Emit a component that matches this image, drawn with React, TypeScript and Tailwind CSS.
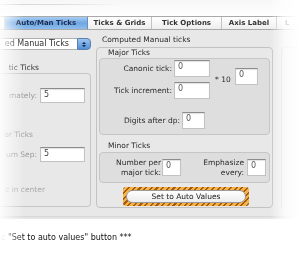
import React from 'react';

const Field = ({ className = '', value = '0' }: { className?: string; value?: string }) => (
    <div
        className={`h-[17px] bg-white border border-[#c2c2c2] border-t-[#8c8c8c] shadow-[inset_0_1px_1px_rgba(0,0,0,0.12)] pl-[3px] text-[8px] leading-[12px] text-[#555] ${className}`}
    >
        {value}
    </div>
);

// right-aligned text, only the part the picture shows
const EdgeLabel = ({ text, className = '' }: { text: string; className?: string }) => (
    <div className={`text-right whitespace-nowrap ${className}`}>{text}</div>
);

const App = () => {
    return (
        <div className="w-[300px] h-[253px] relative overflow-hidden bg-white font-['DejaVu_Sans',sans-serif] text-[#2a2a2a]">
            <div className="blur-[0.3px]">
                {/* top strip */}
                <div className="h-[16px] pt-[4px] bg-gradient-to-b from-[#f7f7f7] to-white">
                    <div className="h-px w-[120px] bg-gradient-to-r from-[#d4d4d4] via-[#dcdcdc] to-transparent" />
                </div>

                {/* Tabs */}
                <div className="h-[14px] flex bg-gradient-to-b from-white to-[#ededed] border-y border-[#a9a9a9] text-[7px] leading-[12px] font-bold text-[#333] whitespace-nowrap">
                    <div className="w-[5px] border-r border-[#b8b8b8]" />
                    <div className="w-[83px] text-center text-[#1c2c4c] bg-gradient-to-b from-[#a9cdf3] via-[#6fa7e3] to-[#8dbdee] border-r border-[#6a8fbc]">
                        Auto/Man Ticks
                    </div>
                    <div className="w-[64px] text-center border-r border-[#c2c2c2]">Ticks &amp; Grids</div>
                    <div className="w-[70px] text-center border-r border-[#c2c2c2]">Tick Options</div>
                    <div className="w-[55px] text-center border-r border-[#c2c2c2]">Axis Label</div>
                    <div className="pl-[8px]">L</div>
                </div>

                {/* Panel */}
                <div className="h-[186px] bg-[#e8e8e8] flex text-[7.5px] leading-[10px]">
                    {/* Left column */}
                    <div className="w-[92px] flex flex-col">
                        <div className="mt-[8px] h-[12px] flex">
                            <div className="flex-1 bg-white border-y border-[#b0b0b0] text-right whitespace-nowrap pr-[8px] leading-[10px] text-[8px]">
                                ed Manual Ticks
                            </div>
                            <div className="w-[14px] rounded-r-[4px] bg-gradient-to-b from-[#9cc5f0] to-[#4f8fd8] border border-[#5b7fae] flex flex-col items-center justify-center gap-[1px]">
                                <div className="w-0 h-0 border-x-[2px] border-x-transparent border-b-[2px] border-b-[#10203a]" />
                                <div className="w-0 h-0 border-x-[2px] border-x-transparent border-t-[2px] border-t-[#10203a]" />
                            </div>
                        </div>
                        <EdgeLabel text="tic Ticks" className="mt-[13px] h-[10px] w-[39px] text-[#333]" />
                        <div className="w-[91px] h-[134px] border-t border-r border-b border-[#c6c6c6] rounded-r-[4px] flex flex-col">
                            <div className="mt-[14px] flex items-center h-[15px]">
                                <EdgeLabel text="mately:" className="w-[37px] text-[#9a9a9a]" />
                                <Field className="ml-[3px] w-[45px] !h-[15px] !text-[#444]" value="5" />
                            </div>
                            <EdgeLabel text="or Ticks" className="mt-[27px] w-[33px] text-[#a0a0a0]" />
                            <div className="mt-[7px] flex items-center h-[15px]">
                                <EdgeLabel text="um Sep:" className="w-[37px] text-[#9a9a9a]" />
                                <Field className="ml-[3px] w-[45px] !h-[15px] !text-[#444]" value="5" />
                            </div>
                            <EdgeLabel text="c in center" className="mt-[23px] w-[45px] text-[#a8a8a8]" />
                        </div>
                    </div>

                    {/* Right column */}
                    <div className="ml-[5px] w-[182px] flex flex-col">
                        <div className="mt-[5px] pl-[6px] h-[10px] whitespace-nowrap">Computed Manual ticks</div>
                        <div className="mt-[2px] h-[161px] border border-[#c2c2c2] rounded-[4px] px-[2px] flex flex-col">
                            <div className="h-[10px] pl-[9px]">Major Ticks</div>
                            <div className="h-[77px] bg-[#dedede] border border-[#c6c6c6] rounded-[4px] flex flex-col">
                                <div className="flex">
                                    <div className="flex flex-col pt-[1px]">
                                        <div className="flex items-center">
                                            <div className="w-[72px] text-right">Canonic tick:</div>
                                            <Field className="ml-[2px] w-[36px]" />
                                        </div>
                                        <div className="flex items-center mt-[5px]">
                                            <div className="w-[72px] text-right">Tick increment:</div>
                                            <Field className="ml-[2px] w-[36px]" />
                                        </div>
                                    </div>
                                    <div className="flex items-end mt-[8px] h-[18px]">
                                        <div className="ml-[5px] w-[20px] whitespace-nowrap">* 10</div>
                                        <Field className="w-[23px]" />
                                    </div>
                                </div>
                                <div className="flex items-center mt-[13px]">
                                    <div className="w-[80px] text-right">Digits after dp:</div>
                                    <Field className="ml-[2px] w-[23px]" />
                                </div>
                            </div>
                            <div className="h-[17px] pt-[6px] pl-[9px]">Minor Ticks</div>
                            <div className="h-[31px] bg-[#dedede] border border-[#c6c6c6] rounded-[4px] flex items-center">
                                <div className="w-[61px] text-right">
                                    Number per
                                    <br />
                                    major tick:
                                </div>
                                <Field className="ml-[1px] w-[19px]" />
                                <div className="w-[63px] text-right">
                                    Emphasize
                                    <br />
                                    every:
                                </div>
                                <Field className="ml-[3px] w-[19px]" />
                            </div>
                            {/* Set to Auto Values */}
                            <div className="mt-[4px] ml-[24px] w-[126px] h-[19px] p-[3px] rounded-[3px] bg-[repeating-linear-gradient(135deg,#a8561a_0px,#a8561a_1.5px,#f2b640_1.5px,#f2b640_4px)]">
                                <div className="h-full rounded-full bg-gradient-to-b from-white to-[#ececec] border border-[#9a9a9a] text-center text-[7.5px] leading-[11px] text-[#1a1a1a]">
                                    Set to Auto Values
                                </div>
                            </div>
                        </div>
                    </div>

                    {/* next group edge, mostly faded out */}
                    <div className="ml-[8px] mt-[17px] w-[20px] h-[161px] border-l border-t border-[#cfcfcf] rounded-tl-[4px]" />
                </div>
                <div className="h-[3px] bg-gradient-to-b from-[#d6d6d6] to-[#ececec]" />

                {/* Caption */}
                <div className="mt-[14px] pl-[1px] text-[8px] leading-[10px] text-[#111] whitespace-nowrap">
                    <span className="text-[#bbb]">c </span>"Set to auto values" button ***
                </div>
            </div>

            {/* edge fades */}
            <div className="absolute left-0 top-0 w-[24px] h-full bg-gradient-to-r from-white/90 via-white/40 to-transparent pointer-events-none" />
            <div className="absolute right-0 top-0 w-[30px] h-full bg-gradient-to-l from-white via-white/80 to-transparent pointer-events-none" />
        </div>
    );
};

export default App;
